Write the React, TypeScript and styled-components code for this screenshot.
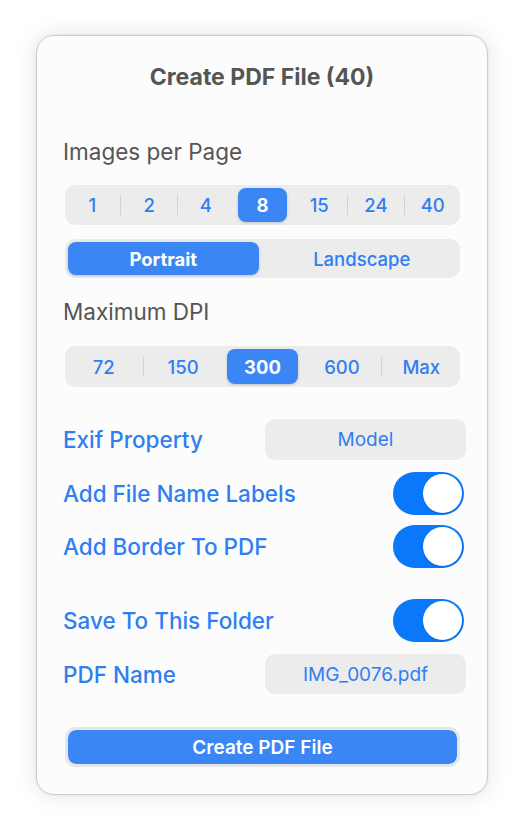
import React from "react";
import styled, { createGlobalStyle } from "styled-components";

const Global = createGlobalStyle`
  html, body { margin: 0; padding: 0; background: #ffffff; }
  body { font-family: Inter, "Noto Sans", "Liberation Sans", sans-serif; -webkit-font-smoothing: antialiased; }
  * { box-sizing: border-box; }
`;

const Page = styled.div`
  width: 524px;
  height: 832px;
  padding: 35px 36px 0 36px;
`;

const Card = styled.div`
  width: 452px;
  height: 760px;
  background: #fcfcfc;
  border: 1px solid #cdcdcd;
  border-radius: 18px;
  box-shadow: 0 0 3px rgba(0, 0, 0, 0.08), 0 0 24px rgba(0, 0, 0, 0.11);
  padding: 29px 21px 27px 28px;
  display: flex;
  flex-direction: column;
`;

const Title = styled.div`
  font-size: 23px;
  line-height: 24px;
  font-weight: 700;
  color: #555555;
  text-align: center;
  margin-left: -7px;
`;

const SectionLabel = styled.div<{ $top: number }>`
  font-size: 22.5px;
  line-height: 24px;
  font-weight: 400;
  color: #555555;
  margin-top: ${(p) => p.$top}px;
  margin-left: -2px;
`;

const Segmented = styled.div<{ $top: number; $height: number }>`
  width: 395px;
  height: ${(p) => p.$height}px;
  margin-top: ${(p) => p.$top}px;
  background: #ececec;
  border-radius: 10px;
  padding: 3px;
  display: flex;
  align-items: stretch;
`;

const SegItem = styled.div<{ $active: boolean }>`
  flex: 1;
  display: flex;
  align-items: center;
  justify-content: center;
  border-radius: 8px;
  font-size: 18.5px;
  font-weight: ${(p) => (p.$active ? 700 : 500)};
  color: ${(p) => (p.$active ? "#ffffff" : "#2f7ff2")};
  background: ${(p) => (p.$active ? "#3a86f5" : "transparent")};
  box-shadow: ${(p) => (p.$active ? "0 1px 3px rgba(0,0,0,0.18)" : "none")};
`;

const Sep = styled.div<{ $hidden: boolean }>`
  width: 1px;
  height: 20px;
  align-self: center;
  margin: 0 3.5px;
  background: ${(p) => (p.$hidden ? "transparent" : "#d3d3d3")};
`;

const Row = styled.div<{ $top: number; $height: number }>`
  display: flex;
  align-items: center;
  justify-content: space-between;
  height: ${(p) => p.$height}px;
  margin-top: ${(p) => p.$top}px;
`;

const RowLabel = styled.div`
  font-size: 22.5px;
  font-weight: 500;
  color: #2f7ff2;
  margin-left: -2px;
`;

const Field = styled.div`
  width: 201px;
  height: 100%;
  background: #ececec;
  border-radius: 10px;
  display: flex;
  align-items: center;
  justify-content: center;
  font-size: 19px;
  font-weight: 400;
  color: #2f7ff2;
`;

const Toggle = styled.div<{ $on: boolean }>`
  width: 71px;
  height: 43px;
  border-radius: 22px;
  background: ${(p) => (p.$on ? "#0a78fb" : "#dcdcdc")};
  padding: 2px;
  display: flex;
  justify-content: ${(p) => (p.$on ? "flex-end" : "flex-start")};
  margin-right: 2px;
`;

const Knob = styled.div`
  width: 39px;
  height: 39px;
  border-radius: 50%;
  background: #ffffff;
  box-shadow: 0 1px 2px rgba(0, 0, 0, 0.15);
`;

const PrimaryButton = styled.button`
  width: 395px;
  height: 40px;
  margin-top: 33px;
  border: 3px solid #e6e6e6;
  border-radius: 11px;
  background: #3a86f5;
  background-clip: padding-box;
  color: #ffffff;
  font-family: inherit;
  font-size: 19px;
  font-weight: 600;
  padding: 0;
  cursor: pointer;
`;

type SegProps = { items: string[]; active: number; top: number; height: number; separators?: boolean };

const Seg = ({ items, active, top, height, separators = true }: SegProps) => (
  <Segmented $top={top} $height={height}>
    {items.map((it, i) => (
      <React.Fragment key={it}>
        {i > 0 && (
          <Sep $hidden={!separators || i === active || i - 1 === active} />
        )}
        <SegItem $active={i === active}>{it}</SegItem>
      </React.Fragment>
    ))}
  </Segmented>
);

const Switch = ({ on }: { on: boolean }) => (
  <Toggle $on={on}>
    <Knob />
  </Toggle>
);

export default function App() {
  return (
    <>
      <Global />
      <Page>
        <Card>
          <Title>Create PDF File (40)</Title>
          <SectionLabel $top={51}>Images per Page</SectionLabel>
          <Seg items={["1", "2", "4", "8", "15", "24", "40"]} active={3} top={21} height={40} />
          <Seg items={["Portrait", "Landscape"]} active={0} top={14} height={39} separators={false} />
          <SectionLabel $top={22}>Maximum DPI</SectionLabel>
          <Seg items={["72", "150", "300", "600", "Max"]} active={2} top={22} height={41} />
          <Row $top={32} $height={41}>
            <RowLabel>Exif Property</RowLabel>
            <Field>Model</Field>
          </Row>
          <Row $top={12} $height={43}>
            <RowLabel>Add File Name Labels</RowLabel>
            <Switch on />
          </Row>
          <Row $top={10} $height={43}>
            <RowLabel>Add Border To PDF</RowLabel>
            <Switch on />
          </Row>
          <Row $top={31} $height={43}>
            <RowLabel>Save To This Folder</RowLabel>
            <Switch on />
          </Row>
          <Row $top={12} $height={40}>
            <RowLabel>PDF Name</RowLabel>
            <Field>IMG_0076.pdf</Field>
          </Row>
          <PrimaryButton>Create PDF File</PrimaryButton>
        </Card>
      </Page>
    </>
  );
}
